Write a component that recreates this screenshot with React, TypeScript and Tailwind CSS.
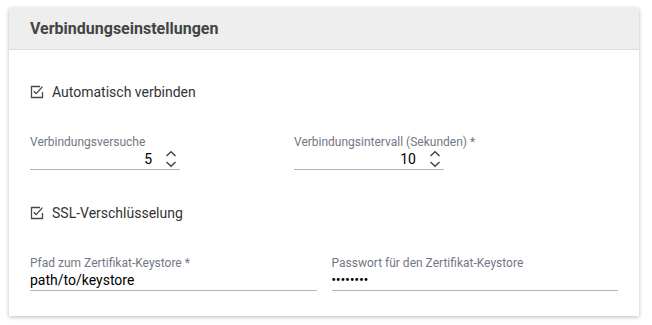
import React from 'react';

const CheckIcon = () => (
  <svg width="14" height="14" viewBox="0 0 14 14" fill="none" className="shrink-0">
    <path d="M10 1.5H1.5V12.5H12.5V7" stroke="#4a4a4a" strokeWidth="1.3" />
    <path d="M3.8 6.2L6.2 8.6L12.4 1.6" stroke="#4a4a4a" strokeWidth="1.4" />
  </svg>
);

const Spinner = () => (
  <svg width="12" height="18" viewBox="0 0 12 18" fill="none" className="shrink-0">
    <path d="M1.5 6L6 1.8L10.5 6" stroke="#444" strokeWidth="1.5" />
    <path d="M1.5 12L6 16.2L10.5 12" stroke="#444" strokeWidth="1.5" />
  </svg>
);

const Checkbox = ({ label }: { label: string }) => (
  <div className="flex items-center h-[20px] gap-[8px]">
    <CheckIcon />
    <span className="text-[14px] text-[#333]">{label}</span>
  </div>
);

const NumberField = ({ label, value }: { label: string; value: string }) => (
  <div className="w-[150px]">
    <div className="text-[12px] leading-[14px] text-[#727785] whitespace-nowrap">{label}</div>
    <div className="flex items-center justify-end h-[21px] border-b border-[#b5b5b5] pr-[3px] gap-[13px]">
      <span className="text-[14px] text-black">{value}</span>
      <Spinner />
    </div>
  </div>
);

const TextField = ({ label, children }: { label: string; children: React.ReactNode }) => (
  <div>
    <div className="text-[12px] leading-[14px] text-[#727785] whitespace-nowrap">{label}</div>
    <div className="flex items-center h-[21px] border-b border-[#b5b5b5]">{children}</div>
  </div>
);

export default function App() {
  return (
    <div className="w-[652px] h-[325px] bg-white pt-[8px] pl-[9px]" style={{ fontFamily: 'Roboto, "Liberation Sans", sans-serif' }}>
      <div className="w-[630px] h-[308px] bg-white shadow-[0_1px_4px_rgba(0,0,0,0.28)]">
        {/* Kopfzeile */}
        <div className="h-[42px] bg-[#eeeeee] border-b border-[#dcdcdc] flex items-center px-[21px]">
          <h2 className="text-[16px] font-bold text-[#444]">Verbindungseinstellungen</h2>
        </div>

        <div className="px-[21px] pt-[32px]">
          <Checkbox label="Automatisch verbinden" />

          <div className="flex gap-[114px] mt-[33px]">
            <NumberField label="Verbindungsversuche" value="5" />
            <NumberField label="Verbindungsintervall (Sekunden) *" value="10" />
          </div>

          <div className="mt-[33px]">
            <Checkbox label="SSL-Verschlüsselung" />
          </div>

          <div className="grid grid-cols-2 gap-[15px] mt-[33px]">
            <TextField label="Pfad zum Zertifikat-Keystore *">
              <span className="text-[14px] text-black">path/to/keystore</span>
            </TextField>
            <TextField label="Passwort für den Zertifikat-Keystore">
              <span className="text-[12px] text-black tracking-[0.3px] font-bold">••••••••</span>
            </TextField>
          </div>
        </div>
      </div>
    </div>
  );
}
